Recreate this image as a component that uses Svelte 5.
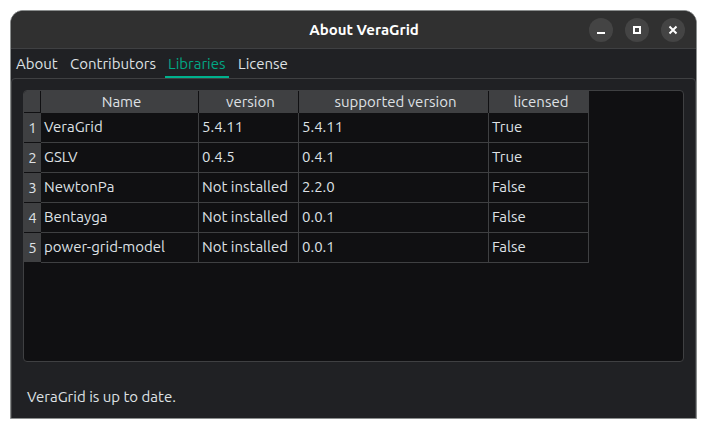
<script>
  const tabs = [
    { label: 'About', width: 41 },
    { label: 'Contributors', width: 85 },
    { label: 'Libraries', width: 57 },
    { label: 'License', width: 50 }
  ];
  let active = $state('Libraries');
  const columns = ['Name', 'version', 'supported version', 'licensed'];
  const rows = [
    ['VeraGrid', '5.4.11', '5.4.11', 'True'],
    ['GSLV', '0.4.5', '0.4.1', 'True'],
    ['NewtonPa', 'Not installed', '2.2.0', 'False'],
    ['Bentayga', 'Not installed', '0.0.1', 'False'],
    ['power-grid-model', 'Not installed', '0.0.1', 'False']
  ];
</script>

<main>
  <section class="window">
    <header>
      <h1>About VeraGrid</h1>
      <div class="controls">
        <button aria-label="Minimize"><svg viewBox="0 0 24 24"><path d="M8 14h8v2H8z" fill="#fff" /></svg></button>
        <button aria-label="Maximize"><svg viewBox="0 0 24 24"><path d="M9 9h6v6H9z" fill="none" stroke="#fff" stroke-width="2" /></svg></button>
        <button aria-label="Close"><svg viewBox="0 0 24 24"><path d="m8.5 8.5 7 7m0-7-7 7" fill="none" stroke="#fff" stroke-width="2" /></svg></button>
      </div>
    </header>
    <nav>
      {#each tabs as tab}
        <button class="tab" class:active={active === tab.label} onclick={() => (active = tab.label)}>
          <span style="width: {tab.width}px">{tab.label}</span>
        </button>
      {/each}
    </nav>
    <div class="pane">
      <div class="frame">
        <div class="grid">
          <div class="corner"></div>
          {#each columns as column}
            <div class="column">{column}</div>
          {/each}
          {#each rows as row, i}
            <div class="index">{i + 1}</div>
            {#each row as cell}
              <div class="cell">{cell}</div>
            {/each}
          {/each}
        </div>
      </div>
      <p>VeraGrid is up to date.</p>
    </div>
  </section>
</main>

<style>
  :global(body) { background: #fff; }
  main {
    box-sizing: border-box;
    width: 707px;
    height: 429px;
    padding: 10px;
    font: 15px/20px Ubuntu, "Noto Sans", sans-serif;
    color: #dfe1e5;
    white-space: nowrap;
  }
  .window {
    box-sizing: border-box;
    width: 687px;
    height: 409px;
    display: flex;
    flex-direction: column;
    border: 1px solid #8b8e8e;
    border-radius: 13px 13px 0 0;
    background: #202124;
    overflow: hidden;
  }
  header {
    display: grid;
    grid-template-columns: 1fr auto 1fr;
    align-items: center;
    height: 37px;
    flex: none;
    background: #303030;
    border-bottom: 1px solid #3f4042;
  }
  h1 {
    grid-column: 2;
    margin: 0 0 0 21px;
    font-size: 15px;
    line-height: 20px;
    font-weight: 700;
    color: #fff;
  }
  .controls { display: flex; justify-content: flex-end; gap: 12px; padding: 1px 11px 0 0; }
  button { border: 0; padding: 0; font: inherit; color: inherit; background: none; }
  .controls button { width: 24px; height: 24px; border-radius: 50%; background: #444; }
  svg { display: block; width: 24px; height: 24px; }
  nav { display: flex; height: 29px; padding-left: 2px; flex: none; }
  .tab { height: 29px; padding: 0 4px 0 3px; margin-right: 6px; box-sizing: border-box; border-bottom: 2px solid transparent; }
  .tab span { display: block; text-align: left; line-height: 20px; margin-top: 2px; }
  .active { color: #00a784; border-color: #00b18d; }
  .pane {
    flex: 1;
    padding: 11px;
    border: 1px solid #3f4042;
    border-radius: 4px 4px 0 0;
  }
  .frame {
    box-sizing: border-box;
    width: 661px;
    height: 272px;
    border: 1px solid #3f4042;
    border-radius: 4px;
    background: #101012;
    overflow: hidden;
  }
  .grid {
    display: grid;
    grid-template-columns: 17px 158px 100px 190px 100px;
    grid-template-rows: 22px repeat(5, 30px);
    width: 565px;
  }
  .grid > div { box-sizing: border-box; }
  .corner, .column, .index { background: #3f4042; text-align: center; }
  .corner { border: solid #101012; border-width: 0 1px 1px 0; }
  .column { border-right: 1px solid #101012; padding-left: 4px; line-height: 22px; }
  .column:nth-child(5) { border-right: 0; }
  .index { border-bottom: 1px solid #101012; line-height: 30px; }
  .cell { border: solid #3f4042; border-width: 0 1px 1px 0; padding-left: 3px; line-height: 28px; }
  p { margin: 25px 0 0 4px; line-height: 20px; }
</style>
